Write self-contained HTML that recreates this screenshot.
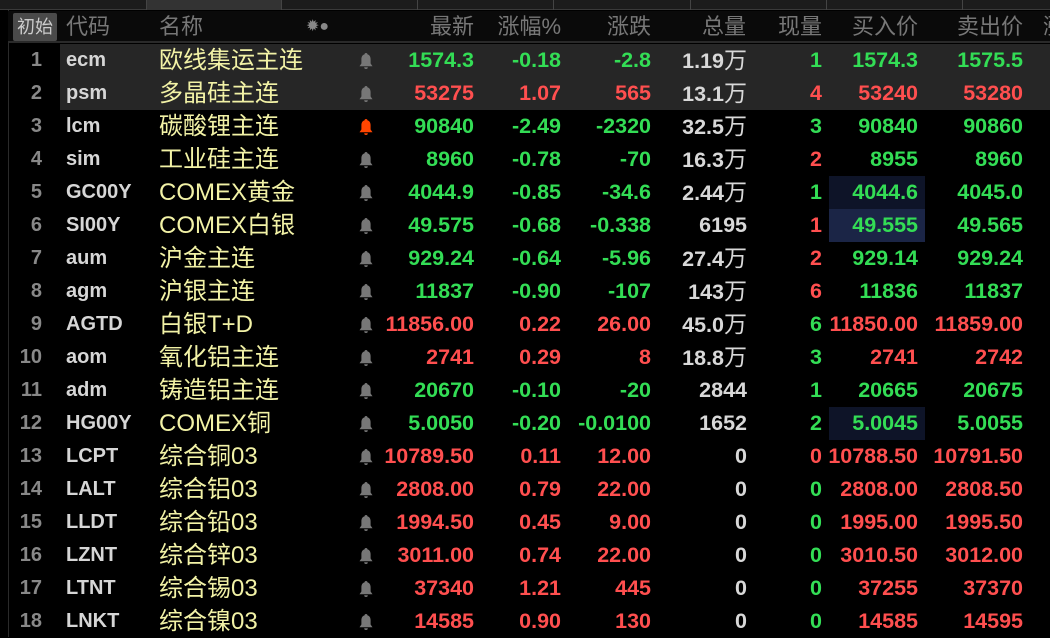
<!DOCTYPE html>
<html><head><meta charset="utf-8"><style>
*{margin:0;padding:0;box-sizing:border-box}
body{width:1050px;height:637px;background:#000;overflow:hidden;position:relative;font-family:"Liberation Sans","Noto Sans CJK SC",sans-serif}
.tabs{position:absolute;left:0;top:0;width:1050px;height:10px;background:#1c1c1c;border-bottom:1px solid #3a3a3a}
.tab{position:absolute;top:0;height:10px;border-left:1px solid #444}
.hdr{position:absolute;left:8px;top:11px;width:1042px;height:32px;background:#0a0a0a;border-bottom:2px solid #2a2a2a}
.vl{position:absolute;left:8px;top:10px;width:1px;height:627px;background:#2a2a2a}
.h{position:absolute;top:11px;font-size:22px;color:#777;line-height:32px;white-space:nowrap}
.init{position:absolute;left:13px;top:13px;width:44px;height:28px;background:#4a4a4a;border-radius:2px;color:#ccc;font-size:18px;line-height:28px;text-align:center}
.row{position:absolute;left:0;width:1050px;height:33px;font-size:21.5px;font-weight:bold;line-height:33px}
.sel{background:#262626;left:60px;width:990px;position:absolute;top:0;height:33px}
.c{position:absolute;white-space:nowrap}
.n{right:1008px;color:#888;font-size:20px}
.cd{left:66px;color:#d6d6d6;font-size:20px}
.nm{left:159px;color:#f2f2a6;font-weight:normal;font-size:24px}
.bell{left:358px;top:8px;width:16px;height:18px}
.r{text-align:right}
.g{color:#33dd55}.rd{color:#ff4f4f}.w{color:#d8d8d8}
.wan{font-weight:normal;font-size:23px}
.bx{position:absolute;left:829px;width:96px;top:0;height:33px}
</style></head><body>
<div class="tabs">
<div class="tab" style="left:146px;width:135px;background:#333"></div>
<div class="tab" style="left:281px"></div><div class="tab" style="left:417px"></div><div class="tab" style="left:553px"></div><div class="tab" style="left:690px"></div><div class="tab" style="left:826px"></div><div class="tab" style="left:962px"></div>
</div>
<div class="vl"></div>
<div class="hdr"></div>
<div class="init">初始</div>
<div class="h" style="left:66px">代码</div>
<div class="h" style="left:159px">名称</div>
<div class="h" style="left:306px;font-size:16px;color:#888">✹●</div>
<div class="h" style="right:576px">最新</div>
<div class="h" style="right:489px">涨幅%</div>
<div class="h" style="right:399px">涨跌</div>
<div class="h" style="right:304px">总量</div>
<div class="h" style="right:228px">现量</div>
<div class="h" style="right:132px">买入价</div>
<div class="h" style="right:27px">卖出价</div>
<div class="h" style="left:1043px">涨</div>
<div id="rows"></div>
<script>
var G='g',R='rd';
var d=[
["ecm","欧线集运主连",G,"1574.3","-0.18","-2.8","1.19","万",G,"1","1574.3","1575.5",0,1],
["psm","多晶硅主连",R,"53275","1.07","565","13.1","万",R,"4","53240","53280",0,1],
["lcm","碳酸锂主连",G,"90840","-2.49","-2320","32.5","万",G,"3","90840","90860",0,0,1],
["sim","工业硅主连",G,"8960","-0.78","-70","16.3","万",R,"2","8955","8960",0],
["GC00Y","COMEX黄金",G,"4044.9","-0.85","-34.6","2.44","万",G,"1","4044.6","4045.0",1],
["SI00Y","COMEX白银",G,"49.575","-0.68","-0.338","6195","",R,"1","49.555","49.565",2],
["aum","沪金主连",G,"929.24","-0.64","-5.96","27.4","万",R,"2","929.14","929.24",0],
["agm","沪银主连",G,"11837","-0.90","-107","143","万",R,"6","11836","11837",0],
["AGTD","白银T+D",R,"11856.00","0.22","26.00","45.0","万",G,"6","11850.00","11859.00",0],
["aom","氧化铝主连",R,"2741","0.29","8","18.8","万",G,"3","2741","2742",0],
["adm","铸造铝主连",G,"20670","-0.10","-20","2844","",G,"1","20665","20675",0],
["HG00Y","COMEX铜",G,"5.0050","-0.20","-0.0100","1652","",G,"2","5.0045","5.0055",1],
["LCPT","综合铜03",R,"10789.50","0.11","12.00","0","",R,"0","10788.50","10791.50",0],
["LALT","综合铝03",R,"2808.00","0.79","22.00","0","",G,"0","2808.00","2808.50",0],
["LLDT","综合铅03",R,"1994.50","0.45","9.00","0","",G,"0","1995.00","1995.50",0],
["LZNT","综合锌03",R,"3011.00","0.74","22.00","0","",G,"0","3010.50","3012.00",0],
["LTNT","综合锡03",R,"37340","1.21","445","0","",G,"0","37255","37370",0],
["LNKT","综合镍03",R,"14585","0.90","130","0","",G,"0","14585","14595",0]];
var h='';
d.forEach(function(r,i){
var t=44+33*i;
h+='<div class="row" style="top:'+t+'px">';
if(r[13])h+='<div class="sel"></div>';
if(r[12]==1)h+='<div class="bx" style="background:#0e1428"></div>';
if(r[12]==2)h+='<div class="bx" style="background:#1b2546"></div>';
h+='<div class="c n">'+(i+1)+'</div>';
h+='<div class="c cd">'+r[0]+'</div>';
h+='<div class="c nm">'+r[1]+'</div>';
var bc=r[14]?'#ff4500':'#777';
h+='<svg class="c bell" viewBox="0 0 16 18"><path d="M8 1C7 1 6.6 1.6 6.6 2.3 4.3 3 3.4 5 3.4 7.3V11.5L1.5 14.3h13L12.6 11.5V7.3C12.6 5 11.7 3 9.4 2.3 9.4 1.6 9 1 8 1zM6.2 15.2a1.8 1.8 0 0 0 3.6 0z" fill="'+bc+'"/></svg>';
function col(x,v,c){return '<div class="c r '+c+'" style="right:'+(1050-x)+'px">'+v+'</div>';}
h+=col(474,r[3],r[2]);
h+=col(561,r[4],r[2]);
h+=col(651,r[5],r[2]);
h+=col(747,r[6]+(r[7]?'<span class="wan">万</span>':''),'w');
h+=col(822,r[9],r[8]);
h+=col(918,r[10],r[2]);
h+=col(1023,r[11],r[2]);
h+='</div>';
});
document.getElementById('rows').innerHTML=h;
</script>
</body></html>
